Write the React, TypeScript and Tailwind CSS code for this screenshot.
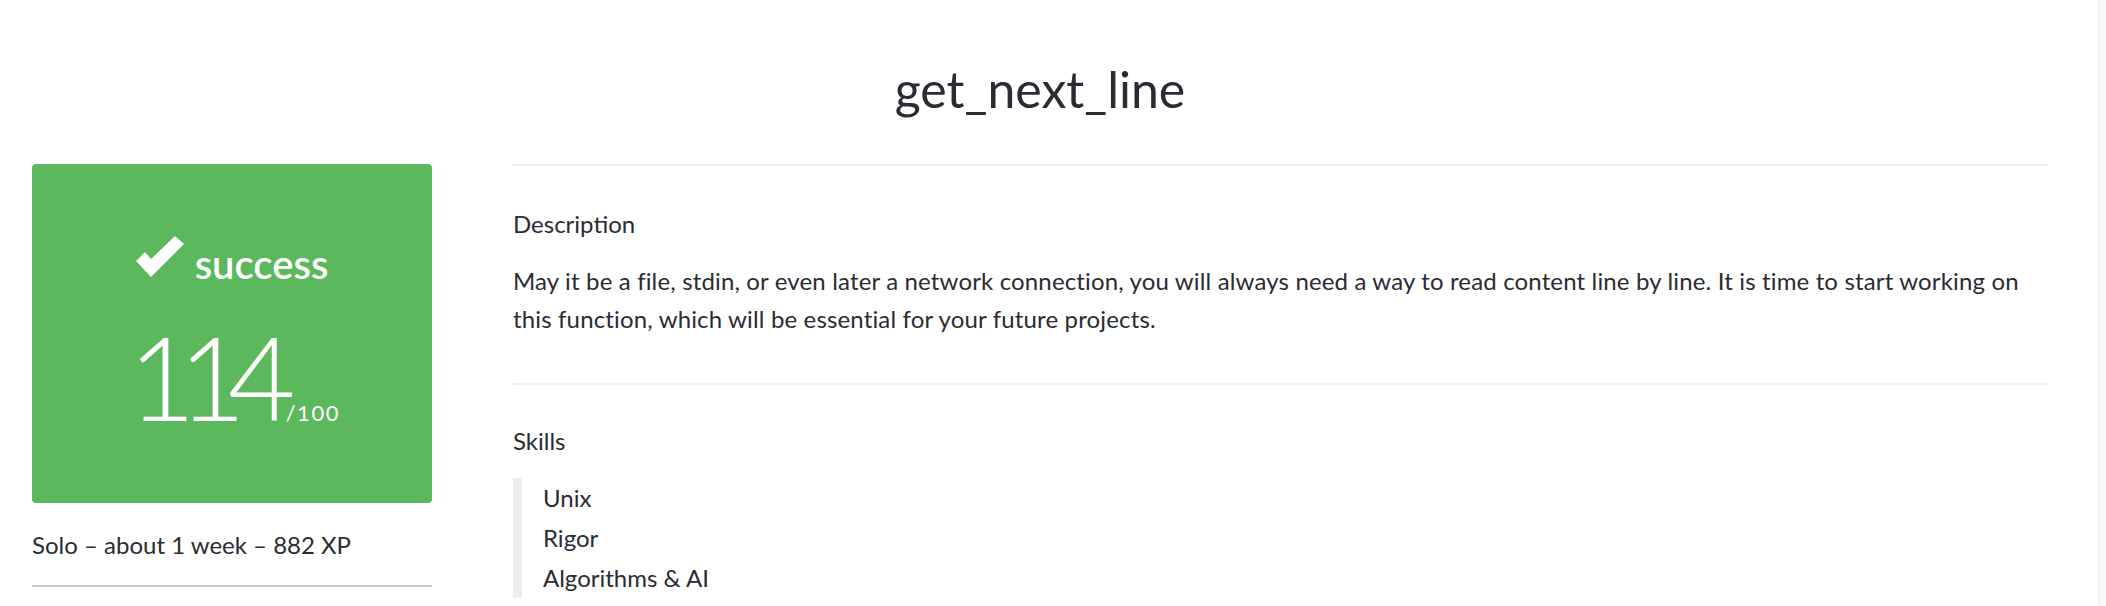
import React from "react";

const font = { fontFamily: "Lato, 'Open Sans', sans-serif" };

function CheckMark() {
  return (
    <svg width="48" height="41" viewBox="0 0 48 41" className="mb-[7px] shrink-0">
      <polygon points="0,25 9,16 15,23 39,0 48,8 15,41" fill="#ffffff" />
    </svg>
  );
}

function ScoreCard() {
  return (
    <div className="flex h-[339px] w-[400px] flex-col items-center rounded-[4px] bg-[#5cb85c] pt-[72px] text-white">
      <div className="flex items-end gap-[11px]">
        <CheckMark />
        <span className="text-[40px] font-semibold leading-none">success</span>
      </div>
      <div className="mt-[34px] flex items-baseline pl-[4px]">
        <span className="text-[117px] font-light leading-none tracking-[-18px]">114</span>
        <span className="ml-[8px] text-[22px] leading-none tracking-[1.5px]">/100</span>
      </div>
    </div>
  );
}

function Section({ title, children }: { title: string; children: React.ReactNode }) {
  return (
    <div>
      <h3 className="text-[24px] leading-[32px]">{title}</h3>
      {children}
    </div>
  );
}

export default function App() {
  const skills = ["Unix", "Rigor", "Algorithms & AI"];

  return (
    <div className="flex h-[606px] w-[2106px] overflow-hidden bg-white text-[#2b2b33]" style={font}>
      <div className="min-w-0 flex-1">
        <h1 className="mt-[64px] pr-[18px] text-center text-[50px] leading-[50px] font-normal">
          get_next_line
        </h1>
        <div className="mt-[50px] flex pl-[32px]">
          <aside className="w-[400px] shrink-0">
            <ScoreCard />
            <p className="mt-[26px] text-[24px] leading-[32px]">Solo – about 1 week – 882 XP</p>
            <div className="mt-[24px] h-[2px] bg-[#cccccc]" />
          </aside>
          <main className="ml-[81px] w-[1535px] shrink-0 border-t-2 border-[#eeeeee]">
            <div className="mt-[42px]">
              <Section title="Description">
                <p className="mt-[22px] text-[24px] leading-[38px] tracking-[0.15px]">
                  May it be a file, stdin, or even later a network connection, you will always need a
                  way to read content line by line. It is time to start working on this function, which
                  will be essential for your future projects.
                </p>
              </Section>
            </div>
            <div className="mt-[45px] h-[2px] bg-[#eeeeee]" />
            <div className="mt-[40px]">
              <Section title="Skills">
                <ul className="mt-[21px] border-l-[9px] border-[#eeeeee] pl-[21px] text-[24px] leading-[40px]">
                  {skills.map((s) => (
                    <li key={s}>{s}</li>
                  ))}
                </ul>
              </Section>
            </div>
          </main>
        </div>
      </div>
      <div className="h-full w-[8px] shrink-0 border-l border-[#ececec] bg-[#f8f8f8]" />
    </div>
  );
}
